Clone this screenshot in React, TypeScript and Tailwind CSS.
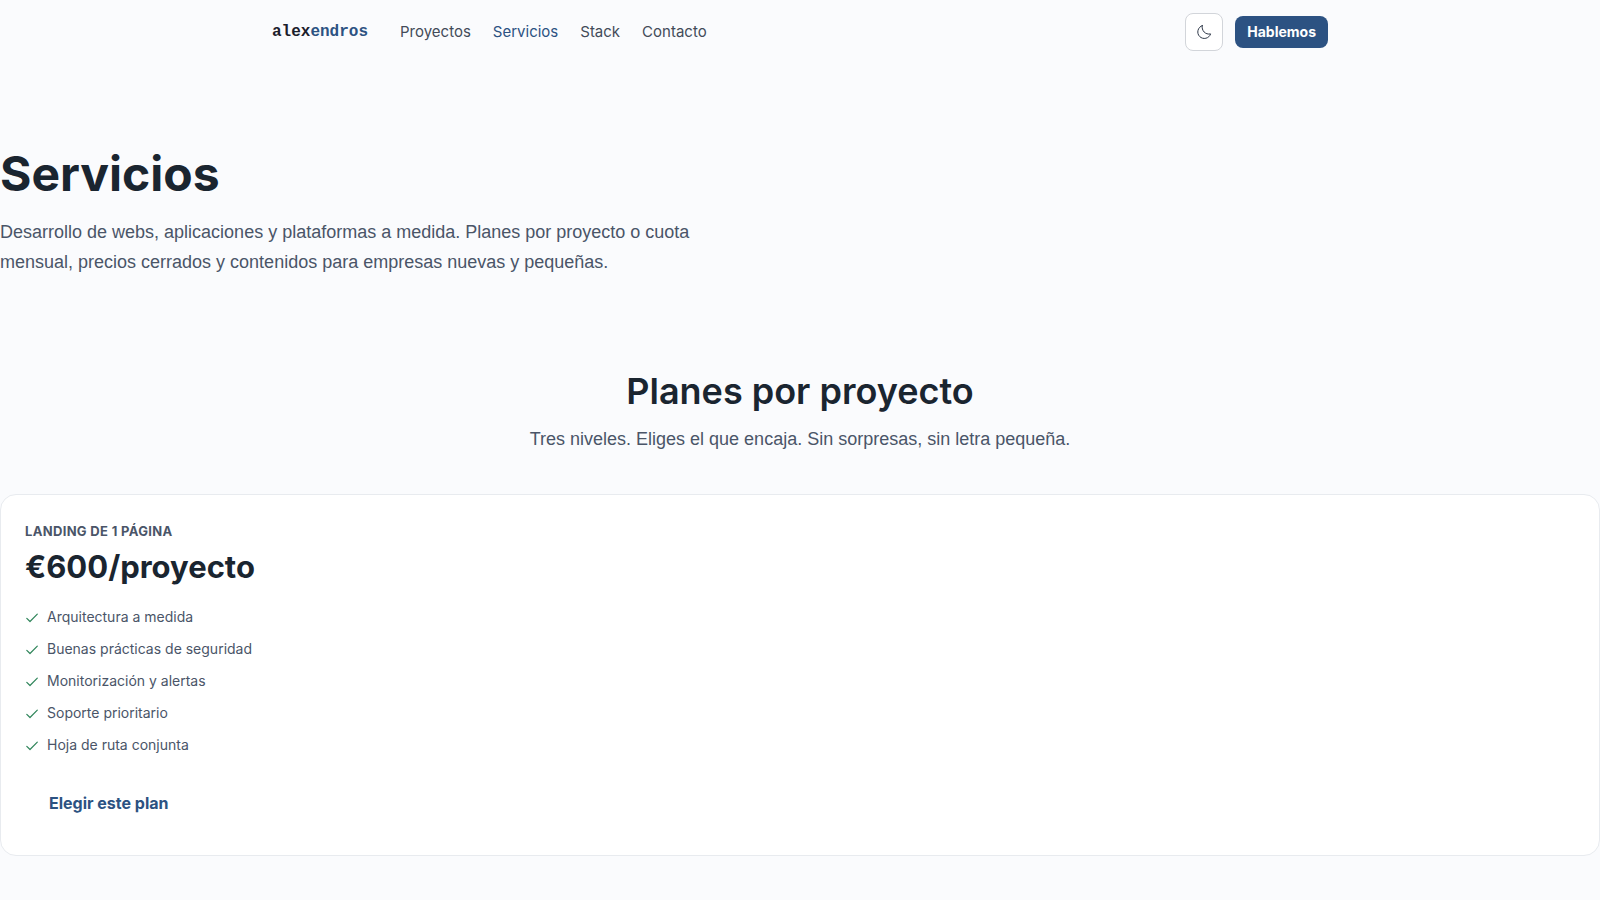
import React from 'react';

type TNavLink = {
    label: string;
    href: string;
    active?: boolean;
}

const navLinks: TNavLink[] = [
    { label: 'Proyectos', href: '#proyectos' },
    { label: 'Servicios', href: '#servicios', active: true },
    { label: 'Stack', href: '#stack' },
    { label: 'Contacto', href: '#contacto' },
]

const plan = {
    name: 'Landing de 1 página',
    price: '€600/proyecto',
    features: [
        'Arquitectura a medida',
        'Buenas prácticas de seguridad',
        'Monitorización y alertas',
        'Soporte prioritario',
        'Hoja de ruta conjunta',
    ],
}

const MoonIcon = () => (
    <svg className="size-4" viewBox="0 0 16 16" fill="none" stroke="currentColor" strokeWidth="1" strokeLinecap="round" strokeLinejoin="round" aria-hidden="true">
        <path d="M6.2 1.6C5.3 6.6 9.4 11 14.6 9.9A6.6 6.6 0 1 1 6.2 1.6Z" />
    </svg>
)

const CheckIcon = () => (
    <svg className="size-3.5 shrink-0 text-[#2f855a]" viewBox="0 0 14 14" fill="none" stroke="currentColor" strokeWidth="1.2" strokeLinecap="round" strokeLinejoin="round" aria-hidden="true">
        <path d="M1.8 8.3L5 11.5L12.3 4.2" />
    </svg>
)

const Header = () => (
    <header className="h-16">
        <div className="mx-auto flex h-full max-w-[1104px] items-center justify-between px-6">
            <div className="flex items-center gap-8">
                <a href="#inicio" className="font-['Liberation_Mono',monospace] text-base font-bold text-[#1a202c]">
                    alex<span className="text-[#2c5282]">endros</span>
                </a>
                <nav className="flex items-center gap-[22px] text-[15px]">
                    {navLinks.map((link) => (
                        <a key={link.label} href={link.href} className={link.active ? "text-[#2c5282]" : "text-[#434b59]"}>
                            {link.label}
                        </a>
                    ))}
                </nav>
            </div>
            <div className="flex items-center gap-3">
                <button type="button" aria-label="Cambiar tema" className="flex size-[38px] items-center justify-center rounded-lg border border-[#d2d5da] bg-white text-[#2d3748]">
                    <MoonIcon />
                </button>
                <a href="#contacto" className="flex h-8 items-center rounded-lg bg-[#2c5282] px-3 text-sm font-bold text-white">
                    Hablemos
                </a>
            </div>
        </div>
    </header>
)

const PlanCard = () => (
    <article className="rounded-2xl border border-[#e8ebef] bg-white p-6">
        <h3 className="text-[13px] leading-6 font-bold tracking-wide text-[#4a5568] uppercase">{plan.name}</h3>
        <p className="text-[31px] leading-12 font-bold text-[#1a2530]">{plan.price}</p>
        <ul className="mt-3.5 flex flex-col gap-2 text-sm leading-6 text-[#4a5568]">
            {plan.features.map((feature) => (
                <li key={feature} className="flex items-center gap-2">
                    <CheckIcon />
                    {feature}
                </li>
            ))}
        </ul>
        <a href="#contacto" className="mt-[22px] mb-1 inline-flex h-12 items-center px-6 font-bold text-[#2c5282]">
            Elegir este plan
        </a>
    </article>
)

const App = () => {
    return (
        <div className="min-h-screen bg-[#fafbfd] font-[Inter,sans-serif] text-[#1a2530]">
            <Header />
            <main>
                <section className="pt-20">
                    <h1 className="text-5xl leading-[60px] font-bold">Servicios</h1>
                    <p className="mt-[13px] max-w-[720px] font-['Liberation_Sans',sans-serif] text-lg leading-[30px] text-[#4a5568]">
                        Desarrollo de webs, aplicaciones y plataformas a medida. Planes por proyecto o cuota mensual, precios cerrados y contenidos para empresas nuevas y pequeñas.
                    </p>
                </section>
                <section className="pt-[90px] pb-12">
                    <div className="mb-10 text-center">
                        <h2 className="text-4xl leading-[48px] font-semibold">Planes por proyecto</h2>
                        <p className="mt-[9px] font-['Liberation_Sans',sans-serif] text-lg leading-[30px] text-[#4a5568]">
                            Tres niveles. Eliges el que encaja. Sin sorpresas, sin letra pequeña.
                        </p>
                    </div>
                    <PlanCard />
                </section>
            </main>
        </div>
    );
};

export default App;
